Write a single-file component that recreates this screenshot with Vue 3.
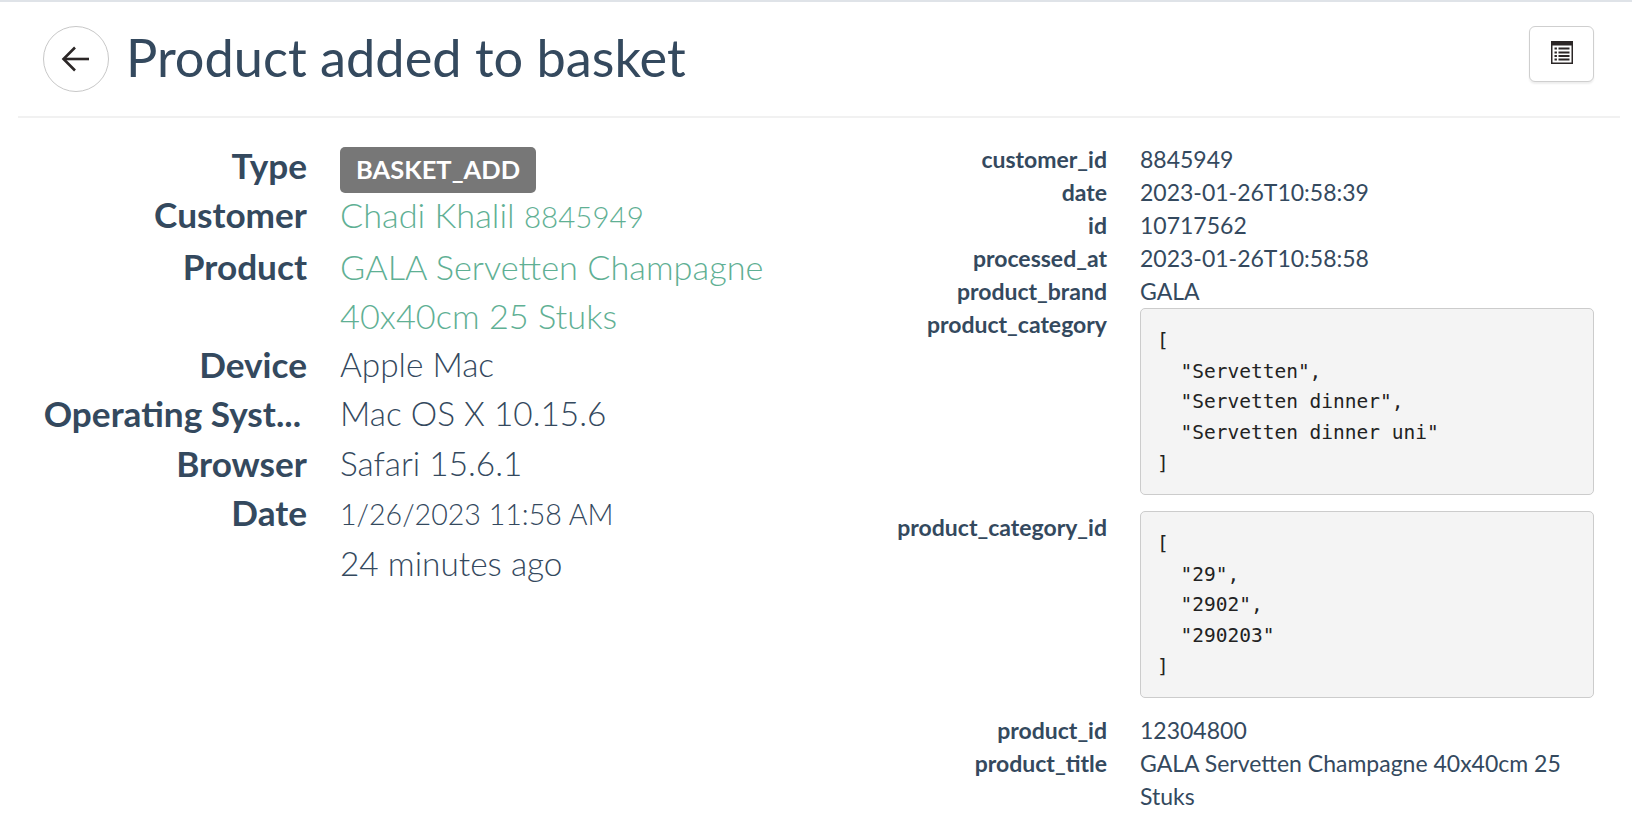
<script setup>
const summary = [
  { label: 'Customer', link: true, value: 'Chadi Khalil', small: '8845949' },
  { label: 'Product', link: true, value: 'GALA Servetten Champagne 40x40cm 25 Stuks' },
  { label: 'Device', value: 'Apple Mac' },
  { label: 'Operating Syst...', value: 'Mac OS X 10.15.6', cut: true },
  { label: 'Browser', value: 'Safari 15.6.1' }
]

const categories = `[
  "Servetten",
  "Servetten dinner",
  "Servetten dinner uni"
]`

const categoryIds = `[
  "29",
  "2902",
  "290203"
]`
</script>

<template>
  <div class="page">
    <header class="head">
      <button class="back">
        <svg width="32" height="32" viewBox="0 0 32 32" fill="none" stroke="#2b2626" stroke-width="2.6">
          <path d="M29 16H4" />
          <path d="M15 4.5 3.5 16 15 27.5" />
        </svg>
      </button>
      <h1>Product added to basket</h1>
      <button class="raw">
        <svg width="22" height="23" viewBox="0 0 22 23">
          <rect width="22" height="23" fill="#2b2626" />
          <rect x="1.5" y="4.5" width="19" height="17" fill="#fff" />
          <g fill="#2b2626">
            <rect x="3.5" y="6.5" width="2.4" height="2" />
            <rect x="7.5" y="6.5" width="11" height="2" />
            <rect x="3.5" y="10.5" width="2.4" height="2" />
            <rect x="7.5" y="10.5" width="11" height="2" />
            <rect x="3.5" y="14" width="2.4" height="2" />
            <rect x="7.5" y="14" width="11" height="2" />
            <rect x="3.5" y="17.5" width="2.4" height="2" />
            <rect x="7.5" y="17.5" width="11" height="2" />
          </g>
        </svg>
      </button>
    </header>

    <main class="cols">
      <dl class="summary">
        <dt>Type</dt>
        <dd><span class="badge">BASKET_ADD</span></dd>

        <template v-for="row in summary" :key="row.label">
          <dt :class="{ cut: row.cut }">{{ row.label }}</dt>
          <dd :class="{ link: row.link }">
            {{ row.value }} <small v-if="row.small">{{ row.small }}</small>
          </dd>
        </template>

        <dt>Date</dt>
        <dd>
          <span class="date">1/26/2023 11:58 AM</span><br />
          24 minutes ago
        </dd>
      </dl>

      <dl class="raw-data">
        <dt>customer_id</dt>
        <dd>8845949</dd>
        <dt>date</dt>
        <dd>2023-01-26T10:58:39</dd>
        <dt>id</dt>
        <dd>10717562</dd>
        <dt>processed_at</dt>
        <dd>2023-01-26T10:58:58</dd>
        <dt>product_brand</dt>
        <dd>GALA</dd>
        <dt>product_category</dt>
        <dd><pre>{{ categories }}</pre></dd>
        <dt>product_category_id</dt>
        <dd><pre>{{ categoryIds }}</pre></dd>
        <dt>product_id</dt>
        <dd>12304800</dd>
        <dt>product_title</dt>
        <dd>GALA Servetten Champagne 40x40cm 25 Stuks</dd>
      </dl>
    </main>
  </div>
</template>

<style>
html,
body {
  margin: 0;
  height: 820px;
  overflow: hidden;
  background: #fff;
}
</style>

<style scoped>
.page {
  height: 818px;
  overflow: hidden;
  border-top: 2px solid #dfe3e8;
  font-family: Lato, "Open Sans", sans-serif;
  color: #34495e;
}

.head {
  display: flex;
  align-items: center;
  height: 114px;
  margin: 0 12px 0 18px;
  padding: 0 26px 0 25px;
  border-bottom: 2px solid #f1f1f1;
  box-sizing: content-box;
}

.back {
  display: flex;
  align-items: center;
  justify-content: center;
  width: 66px;
  height: 66px;
  padding: 0;
  border: 1px solid #c8c8c8;
  border-radius: 50%;
  background: #fff;
}

h1 {
  flex: 1;
  margin: -3px 0 0 17px;
  font-size: 52.3px;
  font-weight: 400;
  line-height: 1.2;
}

.raw {
  display: flex;
  align-items: center;
  justify-content: center;
  width: 65px;
  height: 56px;
  padding: 0 0 4px;
  margin-top: -10px;
  border: 1.5px solid #cfcfcf;
  border-radius: 6px;
  background: #fff;
  box-shadow: 0 2px 2px #eee;
}

.cols {
  display: flex;
  padding: 23px 38px 0 0;
}

dl {
  display: grid;
  margin: 0;
}

dd {
  margin: 0;
}

.summary {
  grid-template-columns: 307px 430px;
  column-gap: 33px;
  width: 770px;
  align-content: start;
  font-size: 33.4px;
  line-height: 49.3px;
}

.summary dt {
  font-size: 35.2px;
  font-weight: 700;
  text-align: right;
}

.summary dt.cut {
  padding-right: 6px;
  white-space: nowrap;
}

.summary dd {
  font-weight: 300;
}

.summary dd.link {
  color: #5fb094;
  font-size: 34.35px;
}

small {
  font-size: 29.5px;
}

.date {
  font-size: 28.6px;
}

.badge {
  display: inline-block;
  padding: 0 16px;
  height: 46px;
  margin: 6px 0 -5px;
  border-radius: 5px;
  background: #777;
  color: #fff;
  font-size: 25.5px;
  font-weight: 700;
  line-height: 45px;
  vertical-align: top;
}

.raw-data {
  flex: 1;
  grid-template-columns: 337px 454px;
  column-gap: 33px;
  align-content: start;
  margin-top: 2px;
  font-size: 23px;
  line-height: 33px;
}

.raw-data dt {
  font-weight: 700;
  text-align: right;
}

pre {
  margin: 0 0 16px;
  padding: 17px 16px 15px;
  height: 187px;
  box-sizing: border-box;
  border: 1px solid #ccc;
  border-radius: 5px;
  background: #f4f4f4;
  color: #222;
  font-family: "DejaVu Sans Mono", monospace;
  font-size: 19.5px;
  line-height: 30.7px;
}
</style>
